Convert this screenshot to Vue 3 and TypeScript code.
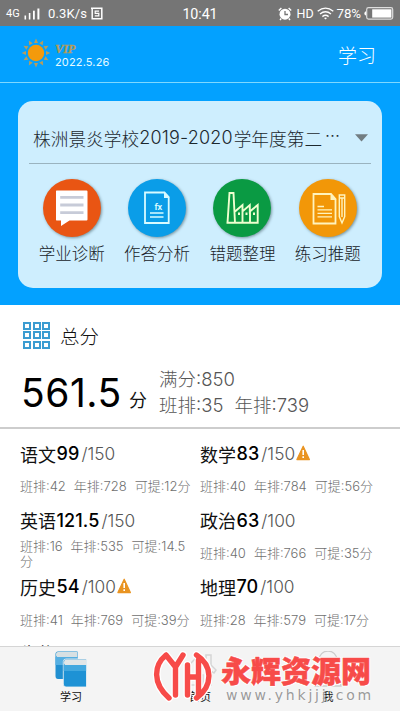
<script setup lang="ts">
interface Subject {
  name: string
  score: string
  full: number
  classRank: number
  yearRank: number
  gain: string
  warn?: boolean
}

const subjects: Subject[] = [
  { name: '语文', score: '99', full: 150, classRank: 42, yearRank: 728, gain: '12' },
  { name: '数学', score: '83', full: 150, classRank: 40, yearRank: 784, gain: '56', warn: true },
  { name: '英语', score: '121.5', full: 150, classRank: 16, yearRank: 535, gain: '14.5' },
  { name: '政治', score: '63', full: 100, classRank: 40, yearRank: 766, gain: '35' },
  { name: '历史', score: '54', full: 100, classRank: 41, yearRank: 769, gain: '39', warn: true },
  { name: '地理', score: '70', full: 100, classRank: 28, yearRank: 579, gain: '17' },
]

const rays = Array.from({ length: 12 }, (_, i) => i * 30)
const cells = [0, 1, 2, 3, 4, 5, 6, 7, 8]
const mark = 'M14 4C2 14 0 32 17 47M14 4L23.5 16L31 4M23.5 16V44M35.5 14V44M46.5 9V44M35.5 26H46.5M44.5 4C60 14 62 34 44.5 47'
</script>

<template>
  <div class="screen">
    <header class="status">
      <div class="status-left">
        <span class="net">4G</span>
        <svg class="signal" width="17" height="12" viewBox="0 0 17 12" fill="#fff">
          <rect x="0.5" y="7.5" width="1.6" height="4" /><rect x="4.8" y="5" width="1.6" height="6.5" />
          <rect x="9" y="2.7" width="1.8" height="8.8" /><rect x="13.4" y="0.5" width="2" height="11" />
        </svg>
        <span class="speed">0.3K/s</span>
        <svg width="12" height="13" viewBox="0 0 12 13" fill="none" stroke="#fff">
          <path d="M0 1.2H10.8V11.7H1.2V1.2" stroke-width="1.5" />
          <path d="M8 4.2H4.2V6.3H7.8V8.8H3.8" stroke-width="1.2" />
        </svg>
      </div>
      <div class="clock">10:41</div>
      <div class="status-right">
        <svg width="14" height="14" viewBox="0 0 14 14">
          <circle cx="7" cy="7.2" r="5.5" fill="#fff" />
          <path d="M.8 3.4 3.4 1M13.2 3.4 10.6 1M3.2 11.5 2 13M10.8 11.5 12 13" stroke="#fff" stroke-width="1.4" />
          <path d="M7 4v3.5h3" fill="none" stroke="#757575" stroke-width="1.3" />
        </svg>
        <span class="hd">HD</span>
        <svg class="wifi" width="17" height="13" viewBox="0 0 17 13" fill="none" stroke="#fff" stroke-width="1.4">
          <path d="M.7 4.2Q8.5-2 16.3 4.2M3 7Q8.5 2.6 14 7M5.4 9.6Q8.5 7 11.6 9.6" />
          <path d="M7 11l1.5 1.5L10 11Q8.5 10 7 11Z" fill="#fff" stroke="none" />
        </svg>
        <span class="percent">78%</span>
        <svg class="battery" width="30" height="13" viewBox="0 0 30 13">
          <rect x="2.7" y=".7" width="26" height="11.4" rx="1.8" fill="none" stroke="#ddd" stroke-width="1.2" />
          <path d="M2 4.2Q.4 4.4.4 6.4T2 8.6Z" fill="#fff" />
          <rect x="8.2" y="2.3" width="19.2" height="8.3" fill="#fff" />
        </svg>
      </div>
    </header>

    <section class="hero">
      <div class="topbar">
        <svg class="sun" width="30" height="30" viewBox="-15 -15 30 30">
          <circle r="8.2" fill="#f39a0c" />
          <path v-for="r in rays" :key="r" d="M-2-10H2L0-14.4Z" fill="#b79d5d" :transform="`rotate(${r})`" />
        </svg>
        <div class="vip">
          <div class="vip-tag">VIP</div>
          <div class="vip-date">2022.5.26</div>
        </div>
        <div class="page-title">学习</div>
      </div>

      <div class="card">
        <div class="picker">
          <span class="exam">株洲景炎学校<span class="exam-year">2019-2020</span>学年度第二<span class="dots">···</span></span>
          <svg width="13" height="8" viewBox="0 0 13 8"><path d="M0 .3H13L6.5 7.5Z" fill="#727d82" /></svg>
        </div>
        <div class="actions">
          <div class="action">
            <div class="disc red">
              <svg width="58" height="58" viewBox="0 0 58 58">
                <path d="M13.5 11.5H43.5Q44.5 11.5 44.5 12.5V40.5Q44.5 41.5 43.5 41.5H26.5L18 47V41.5H13.5Q13 41.5 13 40.5V12.5Q13 11.5 13.5 11.5Z" fill="#fff" />
                <path d="M17.2 18.3H40.5M17.2 26H40.5M17.2 33.7H40.5" stroke="#c7cbd8" stroke-width="2.8" />
              </svg>
            </div>
            <span>学业诊断</span>
          </div>
          <div class="action">
            <div class="disc blue">
              <svg width="58" height="58" viewBox="0 0 58 58" fill="none" stroke="#d8fbff" stroke-width="1.8">
                <path d="M17 13.5H36.5L40.7 18V44H17Z" /><path d="M36 13V19H41.5Z" fill="#d8fbff" stroke="none" />
                <path d="M22 34H35.5M22 38H35.5" stroke-width="1.6" />
                <text x="26.5" y="31" class="formula">fx</text>
              </svg>
            </div>
            <span>作答分析</span>
          </div>
          <div class="action">
            <div class="disc green">
              <svg width="58" height="58" viewBox="0 0 58 58" fill="none" stroke="#efffcf" stroke-width="1.9">
                <path d="M14.5 44L16.5 14H20.5L22 44M13.5 43.8H44.7V26L36.8 32.5V26L29.5 32.5V26L22 32.5M29.5 32V43M37 32V43" />
                <path d="M25 34.8h2M32.5 34.8h2M40 34.8h2" stroke-width="2.5" />
              </svg>
            </div>
            <span>错题整理</span>
          </div>
          <div class="action">
            <div class="disc orange">
              <svg width="58" height="58" viewBox="0 0 58 58" fill="none" stroke="#fff3bd" stroke-width="1.8">
                <path d="M14.5 15H32L36.5 20V44.5H14.5Z" /><path d="M31.5 14.5V21H37.5Z" fill="#fff3bd" stroke="none" />
                <path d="M18.5 27.5H25M18.5 30.8H33M18.5 34.3H33M18.5 37.8H33" stroke-width="1.3" />
                <path d="M40.3 16H45.7V37.5L43 44L40.3 37.5ZM40.3 19H45.7M43 19V38" stroke-width="1.4" />
              </svg>
            </div>
            <span>练习推题</span>
          </div>
        </div>
      </div>
    </section>

    <section class="total">
      <div class="total-head">
        <div class="grid-icon"><i v-for="c in cells" :key="c"></i></div>
        <span>总分</span>
      </div>
      <div class="total-body">
        <span class="big">561.5</span><span class="unit">分</span>
        <div class="ranks"><div>满分:850</div><div>班排:35<b></b>年排:739</div></div>
      </div>
    </section>

    <main class="subjects">
      <article v-for="s in subjects" :key="s.name" class="subject">
        <div class="subject-title">
          <span class="name">{{ s.name }}</span><span class="score">{{ s.score }}</span><span class="full">/{{ s.full }}</span>
          <svg v-if="s.warn" class="warn" width="15" height="16" viewBox="0 0 15 16">
            <path d="M7.2 1.2 13.4 14.6H.9Z" fill="#e99422" stroke="#e99422" stroke-width="1.2" stroke-linejoin="round" />
            <path d="M7.2 5v5M7.2 11.3v1.7" stroke="#fff" stroke-width="1.6" />
          </svg>
        </div>
        <div class="meta"><p>班排:{{ s.classRank }}<b></b>年排:{{ s.yearRank }}<b></b>可提:{{ s.gain }}分</p></div>
      </article>
      <article class="subject next"><div class="subject-title"><span class="name">生物</span></div></article>
    </main>

    <nav class="tabs">
      <div class="tab">
        <svg width="32" height="37" viewBox="0 0 32 37">
          <path d="M.5 3Q.5.5 3 .5H22.5V28H3Q.5 28 .5 25Z" fill="#218fd0" />
          <path d="M.5 6V14H22.5V6Z" fill="#55afe2" />
          <path d="M3 1H22V6H2Q.8 5.5 1 3Q1 1 3 1Z" fill="#d7e0e3" />
          <path d="M8.3 10.5Q8.3 8 11 8H31.5V36H11Q8.3 36 8.3 33Z" fill="#1e92d5" stroke="#f4f4f4" stroke-width=".8" />
          <path d="M8.7 14H31.1V20H8.7Z" fill="#42a8df" />
          <path d="M11 8.5H31V14H10Q8.8 13.5 9 11Q9 8.5 11 8.5Z" fill="#e1e6e7" />
        </svg>
        <span>学习</span>
      </div>
      <div class="tab">
        <svg width="34" height="37" viewBox="0 0 34 37" fill="none" stroke="#d5d5d5" stroke-width="1.5">
          <path d="M2 18 17 3l6 6V4h5v10l5 5-2 3-3-2V34H20V24H13V34H6V19L3 21Z" />
        </svg>
        <span>首页</span>
      </div>
      <div class="tab last">
        <svg width="32" height="37" viewBox="0 0 32 37" fill="none" stroke="#ccc" stroke-width="1.3">
          <circle cx="16" cy="9" r="9" /><path d="M3 35Q4 21 16 21T29 35Z" />
        </svg>
        <span>我</span>
      </div>
      <div class="brand">
        <svg class="brand-mark" width="60" height="54" viewBox="0 0 60 54" fill="none" stroke-linecap="round" stroke-linejoin="round">
          <path :d="mark" stroke="#fff" stroke-width="8" />
          <path :d="mark" stroke="#f74b49" stroke-width="5.4" />
        </svg>
        <div class="brand-text">
          <div class="brand-name">永辉资源网</div>
          <div class="brand-url">www.yhkjjj.com</div>
        </div>
      </div>
    </nav>
  </div>
</template>

<style>
body { margin: 0; overflow: hidden; }
</style>

<style scoped>
.screen {
  width: 400px; height: 711px; overflow: hidden; display: flex; flex-direction: column;
  background: #fff; color: #111; font-family: Inter, "Noto Sans CJK SC", sans-serif; font-weight: 300;
}
.screen * { box-sizing: border-box; }
svg { display: block; flex: none; }
.status {
  flex: none; height: 26px; padding: 1px 6px 0; background: #757575; color: #fff; display: grid;
  grid-template-columns: 1fr auto 1fr; align-items: center; font-family: Roboto, sans-serif; font-weight: 400;
}
.status-left, .status-right { display: flex; align-items: center; }
.net { font-size: 11px; width: 18px; }
.speed { font-size: 13px; margin: 0 3px 0 7px; letter-spacing: .15px; width: 40px; }
.clock { font-size: 14.3px; letter-spacing: -.1px; }
.status-right { justify-content: flex-end; }
.hd { font-size: 12.5px; margin: 0 3px 0 4px; }
.percent { font-size: 13.3px; letter-spacing: -.1px; margin: 0 3px 0 3px; }
.hero { flex: none; height: 279px; background: #03a1ff; }
.topbar { height: 57px; padding: 0 24px 0 21px; display: flex; align-items: center; border-bottom: 1px solid #7fd8ff; }
.sun { margin-top: -2px; }
.vip { margin-left: 4px; padding-top: 3px; color: #e6faff; }
.vip-tag { font: italic bold 12.5px/12px "Liberation Serif", serif; color: #b59c58; -webkit-text-stroke: .3px #b59c58; letter-spacing: -.2px; }
.vip-date { font-size: 11px; line-height: 14px; font-weight: 400; letter-spacing: .15px; }
.page-title { margin-left: auto; color: #fff; font-size: 19px; }
.card { margin: 18px 18px 0; height: 187px; border-radius: 15px; background: #ceeefe; padding: 0 11px; }
.picker { height: 63px; padding: 12px 3px 0 4px; border-bottom: 1px solid #9ab3bf; display: flex; align-items: center; justify-content: space-between; color: #1c282e; }
.exam { font-size: 17.7px; white-space: nowrap; display: flex; }
.exam-year { font-size: 18px; letter-spacing: .2px; width: 94.5px; line-height: 26px; }
.dots { margin-left: 3px; letter-spacing: 0; }
.actions { display: grid; grid-template-columns: repeat(4, 85.4px); padding: 15px 0 0 0; }
.action { display: flex; flex-direction: column; align-items: center; font-size: 16.5px; line-height: 24px; color: #172228; gap: 5px; }
.disc { width: 58px; height: 58px; border-radius: 50%; box-shadow: 1px 1px 3px #7895a0; }
.red { background: #e95513; }
.blue { background: #0a9de8; }
.green { background: #0a9a43; }
.orange { background: #f29708; }
.formula { font: bold 8px "Open Sans", sans-serif; fill: #d8fbff; stroke: none; }
.total { flex: none; height: 124px; border-bottom: 2px solid #cdcdcd; padding: 14px 20px 0 23px; }
.total-head { display: flex; align-items: center; gap: 10px; height: 32px; font-size: 19.5px; }
.grid-icon { display: grid; grid-template-columns: repeat(3, 8px); gap: 1.5px; }
.grid-icon i { width: 8px; height: 8px; border: 2px solid #3b9cd1; }
.total-body { display: flex; height: 60px; align-items: flex-start; }
.big { width: 108px; margin-left: -2px; font-size: 39px; line-height: 46px; padding-top: 19px; font-weight: 400; letter-spacing: .5px; color: #000; }
.unit { width: 30px; font-size: 18px; line-height: 26px; padding-top: 38px; margin-top: -1px; font-weight: 400; }
.ranks { color: #565656; font-size: 18.5px; line-height: 26px; padding-top: 15px; white-space: nowrap; }
.ranks > div { height: 26px; }
.ranks b { display: inline-block; width: 11px; }
.subjects { flex: 1; min-height: 0; overflow: hidden; padding: 9.5px 20px 0; display: grid; grid-template-columns: 180px 180px; grid-auto-rows: 66.7px; align-content: start; }
.subject-title { height: 30px; display: flex; align-items: center; white-space: nowrap; }
.next { margin-top: -.5px; }
.name { font-size: 18px; font-weight: 400; }
.score { font-size: 18px; font-weight: 500; letter-spacing: .1px; margin-left: .5px; color: #000; }
.full { font-size: 17.3px; color: #555; margin-left: 2px; }
.warn { margin: -2px 0 0 1px; }
.meta { height: 36.7px; width: 174px; display: flex; align-items: center; }
.meta p { margin: 0; font-size: 13px; line-height: 15px; color: #707070; word-break: break-all; }
.meta b { display: inline-block; width: 8px; }
.tabs { flex: none; height: 65px; position: relative; background: #f4f4f4; border-top: 1px solid #d5d5d5; display: grid; grid-template-columns: 142px 116px 140px; }
.tab { display: flex; flex-direction: column; align-items: center; padding-top: 4px; font-size: 11px; line-height: 16px; font-weight: 400; gap: 1px; }
.brand { position: absolute; left: 152px; top: 4px; display: flex; }
.brand-text { margin-left: 9px; }
.brand-name {
  font: 900 30px/36px "Noto Sans CJK SC", sans-serif; color: #f74b49; -webkit-text-stroke: .5px #f74b49; white-space: nowrap;
  text-shadow: 1px 1px 0 #fff, -1px -1px 0 #fff, 1px -1px 0 #fff, -1px 1px 0 #fff;
}
.brand-url { font: 400 14px/17px "DejaVu Sans", sans-serif; color: #9a9a9a; letter-spacing: 2.8px; padding-left: 5px; text-shadow: 0 0 2px #fff; white-space: nowrap; }
</style>
